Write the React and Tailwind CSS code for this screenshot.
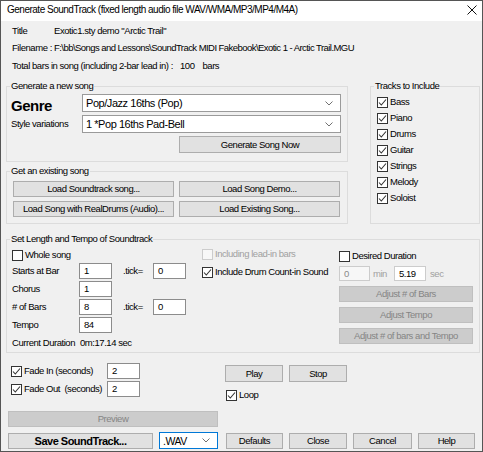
import React from "react";

function Btn({ children, className = "", disabled, bold }) {
  return (
    <div
      className={
        "flex items-center justify-center border shrink-0 " +
        (disabled
          ? "bg-[#cccccc] border-[#bfbfbf] text-[#858585] "
          : "bg-[#e1e1e1] border-[#adadad] text-black ") +
        (bold ? "font-bold text-[11px] tracking-[-0.5px] " : "") +
        className
      }
    >
      {children}
    </div>
  );
}

function Edit({ value, className = "", disabled }) {
  return (
    <div
      className={
        "flex items-center pl-[4px] border shrink-0 " +
        (disabled
          ? "bg-[#f7f7f7] border-[#cccccc] text-[#8a8a8a] "
          : "bg-white border-[#8c8c8c] text-black ") +
        className
      }
    >
      {value}
    </div>
  );
}

function Chevron() {
  return (
    <svg width="8" height="5" viewBox="0 0 8 5" className="shrink-0">
      <path d="M0.5 0.5 L4 4 L7.5 0.5" fill="none" stroke="#606060" strokeWidth="0.9" />
    </svg>
  );
}

function Combo({ value, className = "", focused }) {
  return (
    <div
      className={
        "flex items-center justify-between pl-[3px] pr-[7px] bg-white border shrink-0 " +
        (focused ? "border-[#0078d7] " : "border-[#9a9a9a] ") +
        className
      }
    >
      <span>{value}</span>
      <Chevron />
    </div>
  );
}

function Chk({ label, checked, disabled, className = "" }) {
  return (
    <div className={"flex items-center gap-[2px] " + className}>
      <div
        className={
          "w-[11px] h-[11px] border flex items-center justify-center shrink-0 " +
          (disabled ? "border-[#cccccc] bg-[#f7f7f7]" : "border-[#333333] bg-white")
        }
      >
        {checked && (
          <svg width="9" height="9" viewBox="0 0 9 9">
            <path d="M1 4.5 L3.3 7 L8 1.5" fill="none" stroke="#333333" strokeWidth="1.1" />
          </svg>
        )}
      </div>
      <span className={disabled ? "text-[#a0a0a0]" : ""}>{label}</span>
    </div>
  );
}

function Group({ title, className = "", children }) {
  return (
    <fieldset className={"border border-[#dcdcdc] shrink-0 " + className}>
      <legend className="ml-[3px] px-[1px] leading-[12px]">{title}</legend>
      {children}
    </fieldset>
  );
}

const tracks = ["Bass", "Piano", "Drums", "Guitar", "Strings", "Melody", "Soloist"];

export default function App() {
  return (
    <div className="w-[483px] h-[452px] border border-[#555555] bg-[#f0f0f0] flex flex-col overflow-hidden whitespace-nowrap text-[9.5px] tracking-[-0.45px] leading-[12px] text-black font-['Liberation_Sans',Arial,sans-serif]">
      {/* title bar */}
      <div className="h-[20px] shrink-0 bg-white flex items-start justify-between pt-[3px] pl-[6px] pr-[5px]">
        <span className="text-[10px] tracking-[-0.5px]">Generate SoundTrack (fixed length audio file WAV/WMA/MP3/MP4/M4A)</span>
        <svg width="10" height="10" viewBox="0 0 10 10" className="mt-[1px]">
          <path d="M0.5 0.5 L9.5 9.5 M9.5 0.5 L0.5 9.5" stroke="#111" strokeWidth="1" />
        </svg>
      </div>

      {/* song info */}
      <div className="flex flex-col pl-[11px]">
        <div className="mt-[4px] flex">
          <span className="w-[42px]">Title</span>
          <span>Exotic1.sty demo "Arctic Trail"</span>
        </div>
        <div className="mt-[5px] flex">
          <span className="w-[42px]">Filename :</span>
          <span className="tracking-[-0.55px]">F:\bb\Songs and Lessons\SoundTrack MIDI Fakebook\Exotic 1 - Arctic Trail.MGU</span>
        </div>
        <div className="mt-[6px] flex">
          <span>Total bars in song (including 2-bar lead in) :</span>
          <span className="ml-[7px]">100</span>
          <span className="ml-[8px]">bars</span>
        </div>
      </div>

      {/* generate / existing / tracks */}
      <div className="mt-[8px] pl-[5px] flex items-start">
        <div className="flex flex-col w-[342px]">
          <Group title="Generate a new song" className="w-[342px] h-[82px]">
            <div className="mt-[2px] flex items-center h-[18px]">
              <div className="w-[75px] pl-[4px] h-[17px] pt-[4px] self-start overflow-hidden text-[15px] leading-[16px] tracking-[-0.5px] font-bold">
                Genre
              </div>
              <Combo value="Pop/Jazz 16ths (Pop)" className="w-[259px] h-[18px] text-[11px]" />
            </div>
            <div className="mt-[3px] flex items-center h-[18px]">
              <div className="w-[75px] pl-[4px]">Style variations</div>
              <Combo value="1 *Pop 16ths Pad-Bell" className="w-[259px] h-[18px] text-[11px]" />
            </div>
            <div className="mt-[3px] flex pl-[172px]">
              <Btn className="w-[162px] h-[17px]">Generate Song Now</Btn>
            </div>
          </Group>

          <Group title="Get an existing song" className="mt-[3px] w-[342px] h-[59px]">
            <div className="mt-[4px] flex gap-[5px] pl-[6px]">
              <Btn className="w-[161px] h-[16px]">Load Soundtrack song...</Btn>
              <Btn className="w-[161px] h-[16px]">Load Song Demo...</Btn>
            </div>
            <div className="mt-[4px] flex gap-[5px] pl-[6px]">
              <Btn className="w-[161px] h-[16px]">Load Song with RealDrums (Audio)...</Btn>
              <Btn className="w-[161px] h-[16px]">Load Existing Song...</Btn>
            </div>
          </Group>
        </div>

        <Group title="Tracks to Include" className="ml-[22px] w-[110px] h-[144px]">
          <div className="mt-[2px] flex flex-col pl-[6px]">
            {tracks.map((t) => (
              <Chk key={t} label={t} checked className="h-[16px]" />
            ))}
          </div>
        </Group>
      </div>

      {/* length and tempo */}
      <Group title="Set Length and Tempo of Soundtrack" className="mt-[9px] ml-[5px] w-[474px] h-[120px]">
        <div className="flex items-start">
          <div className="w-[195px] pl-[5px] flex flex-col">
            <Chk label="Whole song" className="mt-[3px] h-[14px]" />
            <div className="mt-[1px] flex items-center h-[16px]">
              <span className="w-[67px]">Starts at Bar</span>
              <Edit value="1" className="w-[33px] h-[16px]" />
              <span className="ml-[11px] w-[30px]">.tick=</span>
              <Edit value="0" className="w-[33px] h-[16px]" />
            </div>
            <div className="mt-[2px] flex items-center h-[16px]">
              <span className="w-[67px]">Chorus</span>
              <Edit value="1" className="w-[33px] h-[16px]" />
            </div>
            <div className="mt-[2px] flex items-center h-[16px]">
              <span className="w-[67px]"># of Bars</span>
              <Edit value="8" className="w-[33px] h-[16px]" />
              <span className="ml-[11px] w-[30px]">.tick=</span>
              <Edit value="0" className="w-[33px] h-[16px]" />
            </div>
            <div className="mt-[2px] flex items-center h-[16px]">
              <span className="w-[67px]">Tempo</span>
              <Edit value="84" className="w-[33px] h-[16px]" />
            </div>
            <div className="mt-[4px] flex h-[12px]">
              <span className="w-[68px]">Current Duration</span>
              <span>0m:17.14 sec</span>
            </div>
          </div>

          <div className="w-[137px] flex flex-col">
            <Chk label="Including lead-in bars" disabled className="mt-[2px] h-[14px]" />
            <Chk label="Include Drum Count-in Sound" checked className="mt-[4px] h-[14px]" />
          </div>

          <div className="w-[134px] flex flex-col">
            <Chk label="Desired Duration" className="mt-[4px] h-[14px]" />
            <div className="mt-[3px] flex items-center h-[15px]">
              <Edit value="0" disabled className="w-[31px] h-[15px]" />
              <span className="ml-[3px] w-[21px] text-[#a0a0a0]">min</span>
              <Edit value="5.19" className="w-[32px] h-[15px] border-[#cccccc]" />
              <span className="ml-[4px] text-[#a0a0a0]">sec</span>
            </div>
            <Btn disabled className="mt-[5px] w-[134px] h-[16px]">Adjust # of Bars</Btn>
            <Btn disabled className="mt-[5px] w-[134px] h-[16px]">Adjust Tempo</Btn>
            <Btn disabled className="mt-[5px] w-[134px] h-[16px]">Adjust # of bars and Tempo</Btn>
          </div>
        </div>
      </Group>

      {/* fades and play */}
      <div className="flex items-start pl-[10px]">
        <div className="w-[214px] flex flex-col">
          <div className="mt-[10px] flex items-center h-[16px]">
            <Chk label="Fade In (seconds)" checked className="w-[96px]" />
            <Edit value="2" className="w-[33px] h-[16px]" />
          </div>
          <div className="mt-[2px] flex items-center h-[16px]">
            <Chk label={"Fade Out\u00a0 (seconds)"} checked className="w-[96px]" />
            <Edit value="2" className="w-[33px] h-[16px]" />
          </div>
        </div>
        <div className="flex flex-col">
          <div className="mt-[12px] flex gap-[6px]">
            <Btn className="w-[58px] h-[17px]">Play</Btn>
            <Btn className="w-[58px] h-[17px]">Stop</Btn>
          </div>
          <Chk label="Loop" checked className="mt-[7px] ml-[1px] h-[12px]" />
        </div>
      </div>

      <div className="mt-[10px] pl-[7px] flex">
        <Btn disabled className="w-[210px] h-[16px]">Preview</Btn>
      </div>

      <div className="mt-[5px] pl-[7px] flex items-center">
        <Btn bold className="w-[145px] h-[16px]">Save SoundTrack...</Btn>
        <Combo value=".WAV" focused className="ml-[6px] w-[59px] h-[17px] text-[10.5px]" />
        <Btn className="ml-[8px] w-[57px] h-[16px]">Defaults</Btn>
        <Btn className="ml-[6px] w-[58px] h-[16px]">Close</Btn>
        <Btn className="ml-[6px] w-[59px] h-[16px]">Cancel</Btn>
        <Btn className="ml-[6px] w-[57px] h-[16px]">Help</Btn>
      </div>
    </div>
  );
}
